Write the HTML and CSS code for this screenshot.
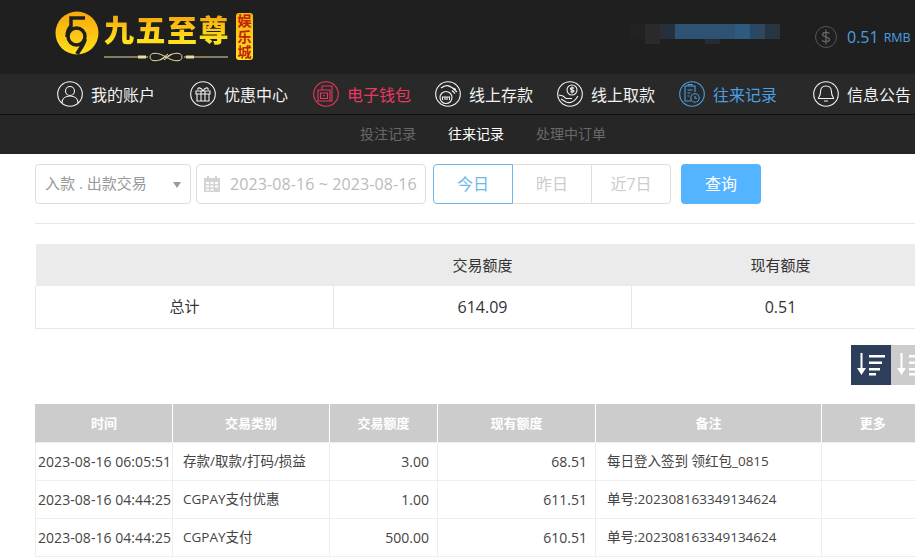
FILE: index.html
```html
<!DOCTYPE html>
<html lang="zh-CN">
<head>
  <meta charset="UTF-8" />
  <title>往来记录</title>
  <link rel="stylesheet" href="styles.css">
</head>
<body>
  <header class="topbar">
    <div class="logo">
      <svg class="logo-mark" width="44" height="46" viewBox="0 0 44 46">
        <defs>
          <linearGradient id="gold" x1="0" y1="0" x2="0" y2="1">
            <stop offset="0" stop-color="#f7a80c"/>
            <stop offset="1" stop-color="#ffe01a"/>
          </linearGradient>
        </defs>
        <circle cx="22" cy="22" r="21.5" fill="url(#gold)"/>
        <path d="M30 7H16v8c-3 3-4 7-4 11" fill="none" stroke="#1f1f1f" stroke-width="3.500"/>
        <circle cx="21.500" cy="25.500" r="8.500" fill="none" stroke="#1f1f1f" stroke-width="3.500"/>
        <path d="M30 28c-1 5-5 10-8 15" fill="none" stroke="#1f1f1f" stroke-width="4"/>
      </svg>
      <div class="logo-name">
        <div class="logo-text">九五至尊</div>
        <svg class="logo-line" width="124" height="12" viewBox="0 0 124 12">
          <path d="M0 6H44M80 6H124" stroke="#e8dca0" stroke-width="1"/>
          <path d="M34 4.500h8v3h-8zM82 4.500h8v3h-8z" fill="#e8dca0"/>
          <path d="M46 6c0-5 8-5 16 0s16 5 16 0-8-5-16 0-16 5-16 0z" fill="none" stroke="#e8dca0" stroke-width="1"/>
          <path d="M56 9l8-6M60 9l8-6" stroke="#e8dca0" stroke-width="1"/>
        </svg>
      </div>
      <div class="logo-badge">娱乐城</div>
    </div>
    <svg class="blur-name" width="150" height="20" viewBox="0 0 150 20">
      <rect x="0" y="0" width="15" height="15" fill="#222"/>
      <rect x="15" y="0" width="15" height="20" fill="#2a2a2a"/>
      <rect x="30" y="0" width="15" height="15" fill="#26303a"/>
      <rect x="45" y="0" width="60" height="15" fill="#2d5273"/>
      <rect x="75" y="15" width="15" height="5" fill="#262c32"/>
      <rect x="105" y="0" width="15" height="15" fill="#2f5a80"/>
      <rect x="120" y="0" width="15" height="15" fill="#2b4860"/>
      <rect x="135" y="0" width="15" height="15" fill="#28343f"/>
    </svg>
    <div class="balance">
      <svg width="22" height="22" viewBox="0 0 22 22">
        <circle cx="11" cy="11" r="10.500" fill="none" stroke="#555"/>
        <path d="M14.500 7.500c-1-1.500-7-2-7 1s7 2 7 5-6 2.500-7.500 1M11 3.500v15" fill="none" stroke="#666" stroke-width="1.300"/>
      </svg>
      <span class="amount">0.51</span>
      <span class="unit">RMB</span>
    </div>
  </header>

  <nav class="mainnav">
    <a class="nav-item">
      <svg class="nav-icon" viewBox="0 0 26 26"><circle cx="13" cy="13" r="12.300"/><circle cx="13" cy="10" r="4.500"/><path d="M5 22c0-5 4-7 8-7s8 2 8 7"/></svg>
      我的账户
    </a>
    <a class="nav-item">
      <svg class="nav-icon" viewBox="0 0 26 26"><circle cx="13" cy="13" r="12.300"/><path d="M6 10h14v3H6zM7 13v7h12v-7M11 10v10M15 10v10M13 10c-2-4-6-4-5-1M13 10c2-4 6-4 5-1"/></svg>
      优惠中心
    </a>
    <a class="nav-item red">
      <svg class="nav-icon" viewBox="0 0 26 26"><circle cx="13" cy="13" r="12.300"/><path d="M9 9V5h10v15h-5M5 9h12v11H5zM7.500 12h7v5.500h-7z"/><path d="M10 14.800h2"/></svg>
      电子钱包
    </a>
    <a class="nav-item">
      <svg class="nav-icon" viewBox="0 0 26 26"><circle cx="13" cy="13" r="12.300"/><circle cx="11" cy="16.500" r="6"/><path d="M7.500 19v-3h7v3M10 16v3M12 16v3M6 7c4-3 8-3 10-1l5 2.500M12 4.500l5 2 5 4.500M17 9.500l3 3"/></svg>
      线上存款
    </a>
    <a class="nav-item">
      <svg class="nav-icon" viewBox="0 0 26 26"><circle cx="13" cy="13" r="12.300"/><circle cx="15" cy="9" r="5"/><path d="M17 7.300c-1-1-4-.8-3.500.7s3.500.6 3.500 2-2.500 1.300-3.500.5M15 5.500v7M2 14l4 1 3 2.500h6M4 18l5 3c5 2 9-1 12-6"/></svg>
      线上取款
    </a>
    <a class="nav-item blue">
      <svg class="nav-icon" viewBox="0 0 26 26"><circle cx="13" cy="13" r="12.300"/><path d="M12 20H6V5h10v6M9 5V3.500h4V5M8.500 9h5M8.500 12h3M8.500 15h2"/><circle cx="16" cy="17" r="4.200"/><path d="M16 15v2.300h2"/></svg>
      往来记录
    </a>
    <a class="nav-item">
      <svg class="nav-icon" viewBox="0 0 26 26"><circle cx="13" cy="13" r="12.300"/><path d="M13 5c-4 0-5.500 3-5.500 6 0 4-2 5-2 6.500h15c0-1.500-2-2.500-2-6.500 0-3-1.500-6-5.500-6zM11 20h4"/></svg>
      信息公告
    </a>
  </nav>

  <nav class="subnav">
    <a>投注记录</a>
    <a class="active">往来记录</a>
    <a>处理中订单</a>
  </nav>

  <main class="content">
    <div class="filters">
      <div class="select"><span class="select-text">入款 . 出款交易</span><span class="caret"></span></div>
      <div class="daterange">
        <svg width="16" height="16" viewBox="0 0 16 16">
          <path d="M0 2h16v14H0z" fill="#d4d4d4"/>
          <path d="M3 0h2v3H3zM11 0h2v3h-2z" fill="#d4d4d4"/>
          <path d="M2 6h3v2H2zM6.500 6h3v2h-3zM11 6h3v2h-3zM2 9.500h3v2H2zM6.500 9.500h3v2h-3zM11 9.500h3v2h-3zM2 13h3v1.500H2zM6.500 13h3v1.500h-3z" fill="#fff"/>
        </svg>
        <span>2023-08-16 ~ 2023-08-16</span>
      </div>
      <div class="days">
        <button class="day current">今日</button>
        <button class="day">昨日</button>
        <button class="day">近7日</button>
      </div>
      <button class="search">查询</button>
    </div>

    <table class="summary">
      <tr><th></th><th>交易额度</th><th>现有额度</th></tr>
      <tr><td class="label">总计</td><td>614.09</td><td>0.51</td></tr>
    </table>

    <div class="sorts">
      <button class="sort on">
        <svg width="32" height="24" viewBox="0 0 32 24"><path d="M5.500 0h2v15h3.500l-4.500 7-4.500-7h3.500zM14 2h16v2.500H14zM14 8.500h13V11H14zM14 15h11v2.500H14zM14 20h7v2.500h-7z" fill="#fff"/></svg>
      </button>
      <button class="sort">
        <svg width="32" height="24" viewBox="0 0 32 24"><path d="M5.500 0h2v15h3.500l-4.500 7-4.500-7h3.500zM14 2h16v2.500H14zM14 8.500h13V11H14zM14 15h11v2.500H14zM14 20h7v2.500h-7z" fill="#fff"/></svg>
      </button>
    </div>

    <table class="records">
      <colgroup>
        <col class="c-time"><col class="c-type"><col class="c-amt"><col class="c-bal"><col class="c-note"><col class="c-more">
      </colgroup>
      <thead>
        <tr><th>时间</th><th>交易类别</th><th>交易额度</th><th>现有额度</th><th>备注</th><th>更多</th></tr>
      </thead>
      <tbody>
        <tr>
          <td class="time">2023-08-16 06:05:51</td><td class="type">存款/取款/打码/损益</td><td class="num">3.00</td><td class="num">68.51</td><td class="note">每日登入签到 领红包_0815</td><td></td>
        </tr>
        <tr>
          <td class="time">2023-08-16 04:44:25</td><td class="type">CGPAY支付优惠</td><td class="num">1.00</td><td class="num">611.51</td><td class="note">单号:202308163349134624</td><td></td>
        </tr>
        <tr>
          <td class="time">2023-08-16 04:44:25</td><td class="type">CGPAY支付</td><td class="num">500.00</td><td class="num">610.51</td><td class="note">单号:202308163349134624</td><td></td>
        </tr>
      </tbody>
    </table>
  </main>
</body>
</html>
```

FILE: styles.css
```css
html, body {
  margin: 0;
  height: 557px;
  overflow: hidden;
}

body {
  font-family: "Open Sans", "Noto Sans CJK SC", sans-serif;
  font-size: 14px;
  color: #444;
  background: #fff;
}

.topbar {
  display: flex;
  align-items: center;
  height: 74px;
  background: #1f1f1f;
}

.logo {
  display: flex;
  align-items: flex-start;
  width: 630px;
  height: 74px;
  padding: 11px 0 0 55px;
  box-sizing: border-box;
}

.logo-mark {
  flex: none;
}

.logo-name {
  margin-left: 5px;
  width: 132px;
}

.logo-text {
  margin-top: -1px;
  font-family: "Noto Sans CJK SC", sans-serif;
  font-size: 30px;
  font-weight: 900;
  line-height: 36px;
  letter-spacing: 1.500px;
  white-space: nowrap;
  background: linear-gradient(180deg, #f6a80c 15%, #ffe21c 85%);
  -webkit-background-clip: text;
  background-clip: text;
  color: transparent;
}

.logo-line {
  display: block;
  margin-top: 5px;
}

.logo-badge {
  width: 17px;
  height: 47px;
  margin-top: 2px;
  border-radius: 3px;
  background: linear-gradient(180deg, #f9b50f, #ffe21c);
  color: #c0200c;
  font-family: "Noto Sans CJK SC", sans-serif;
  font-size: 14px;
  font-weight: 700;
  line-height: 15.500px;
  text-align: center;
}

.blur-name {
  flex: none;
  margin-top: -7px;
}

.balance {
  display: flex;
  align-items: center;
  margin-left: 35px;
}

.balance .amount {
  margin-left: 10px;
  font-size: 16px;
  color: #4a9fe3;
}

.balance .unit {
  margin-left: 5px;
  font-size: 12.500px;
  color: #4a9fe3;
}

.mainnav {
  display: flex;
  gap: 24px;
  height: 40px;
  padding-left: 57px;
  align-items: center;
  background: #292929;
  border-bottom: 1px solid #111;
}

.nav-item {
  display: flex;
  align-items: center;
  gap: 8px;
  font-size: 16px;
  color: #f2f2f2;
  white-space: nowrap;
}

.nav-item:first-child {
  margin-right: 11px;
}

.nav-item:nth-child(2) {
  margin-right: 1px;
}

.nav-item:nth-child(6) {
  margin-right: 12px;
}

.nav-item.red {
  color: #e8395f;
}

.nav-item.blue {
  color: #4a9fe3;
}

.nav-icon {
  width: 26px;
  height: 26px;
  fill: none;
  stroke: currentColor;
  stroke-width: 1.100;
}

.subnav {
  display: flex;
  justify-content: center;
  align-items: center;
  gap: 32px;
  height: 36px;
  padding: 0 0 3px 51px;
  background: #262626;
  color: #686868;
}

.subnav .active {
  color: #fff;
}

.content {
  width: 896px;
  margin-left: 35px;
}

.filters {
  display: flex;
  height: 40px;
  padding: 10px 0 19px;
  border-bottom: 1px solid #e8e8e8;
}

.select, .daterange {
  display: flex;
  align-items: center;
  box-sizing: border-box;
  height: 40px;
  border: 1px solid #ddd;
  border-radius: 4px;
  color: #999;
}

.select {
  position: relative;
  width: 156px;
  padding-left: 9px;
  font-size: 15px;
}

.select-text {
  margin-top: -3px;
}

.caret {
  position: absolute;
  right: 9px;
  top: 17px;
  border: 4px solid transparent;
  border-top: 6px solid #999;
  border-bottom: 0;
}

.daterange {
  width: 230px;
  margin-left: 5px;
  padding-left: 7px;
  gap: 10px;
  font-size: 16px;
  letter-spacing: 0.100px;
  white-space: nowrap;
  color: #bbb;
}

.days {
  display: flex;
  margin-left: 7px;
}

.day {
  box-sizing: border-box;
  width: 80px;
  height: 40px;
  margin-left: -1px;
  padding: 0 0 2px;
  border: 1px solid #ddd;
  background: #fff;
  color: #ccc;
  font: inherit;
  font-size: 16px;
}

.day:first-child {
  margin-left: 0;
  border-radius: 4px 0 0 4px;
}

.day:last-child {
  border-radius: 0 4px 4px 0;
}

.day.current {
  position: relative;
  border-color: #6db8e8;
  color: #6db8e8;
}

.search {
  width: 80px;
  height: 40px;
  margin-left: 10px;
  padding: 0 0 2px;
  border: none;
  border-radius: 4px;
  background: #55b4ff;
  color: #fff;
  font: inherit;
  font-size: 16px;
}

.summary {
  width: 895px;
  margin-top: 20px;
  table-layout: fixed;
  border-collapse: collapse;
}

.summary th {
  box-sizing: border-box;
  height: 42px;
  padding: 0 0 2px;
  background: #ebebeb;
  color: #333;
  font-size: 15px;
  font-weight: 400;
}

.summary td {
  box-sizing: border-box;
  height: 42px;
  padding: 0;
  border: 1px solid #e8e8e8;
  border-top: none;
  text-align: center;
  font-size: 16px;
  color: #333;
}

.summary td.label {
  padding-bottom: 2px;
  font-size: 15px;
}

.sorts {
  display: flex;
  justify-content: flex-end;
  margin-top: 16px;
}

.sort {
  display: flex;
  align-items: center;
  justify-content: center;
  width: 40px;
  height: 40px;
  padding: 0;
  border: none;
  background: #ccc;
}

.sort.on {
  background: #2c3e5a;
}

.records {
  width: 888px;
  margin-top: 19px;
  table-layout: fixed;
  border-collapse: collapse;
}

.c-time { width: 137px; }
.c-type { width: 157px; }
.c-amt { width: 108px; }
.c-bal { width: 158px; }
.c-note { width: 226px; }
.c-more { width: 102px; }

.records th {
  height: 38px;
  padding: 0;
  background: #ccc;
  border-left: 1px solid #fff;
  color: #fff;
  font-size: 13px;
  font-weight: 700;
}

.records th:first-child {
  border-left-color: #ccc;
}

.records td {
  box-sizing: border-box;
  height: 38px;
  padding: 0;
  border: 1px solid #eee;
  white-space: nowrap;
}

.records .time {
  padding-left: 2px;
  font-size: 14px;
  letter-spacing: 0.050px;
}

.records .type, .records .note {
  padding: 0 0 2px 10px;
  font-size: 13.500px;
}

.records .note {
  padding-left: 11px;
}

.records .num {
  padding-right: 8px;
  text-align: right;
}
```
